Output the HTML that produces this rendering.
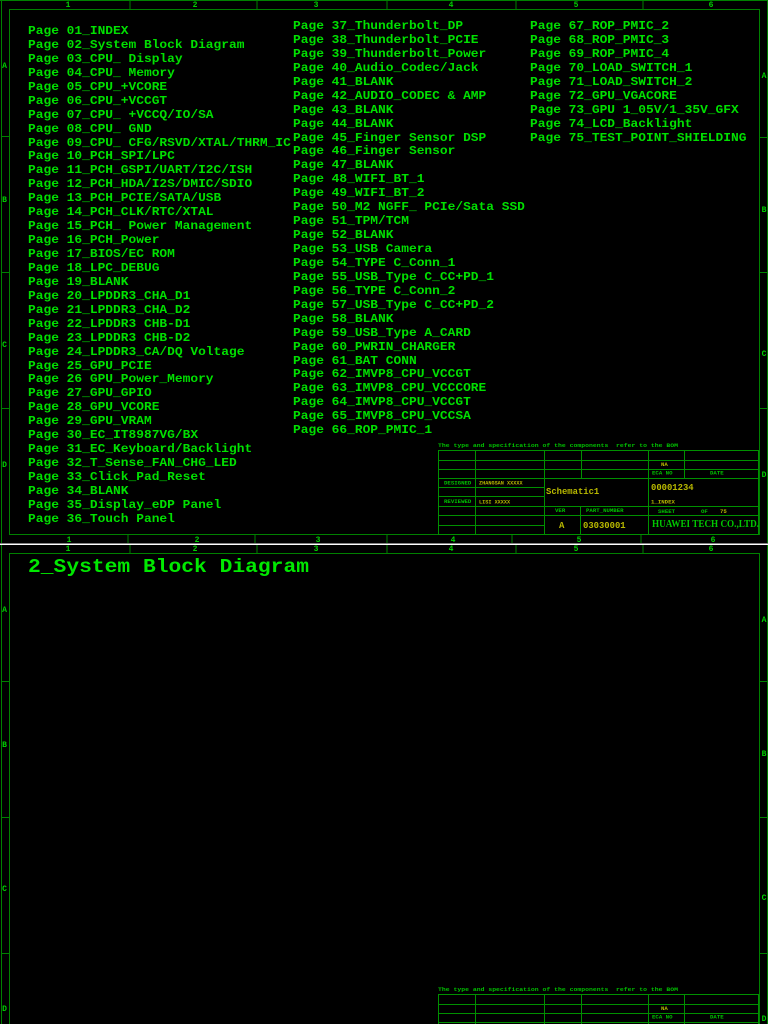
<!DOCTYPE html>
<html><head><meta charset="utf-8"><style>
html,body{margin:0;padding:0;background:#000;width:768px;height:1024px;overflow:hidden}
.c{position:absolute;white-space:pre;font:bold 11.8px/13.94px "Liberation Mono",monospace;color:#00e000;margin:0;transform:scaleX(1.092);transform-origin:0 0}
svg{position:absolute;left:0;top:0}
</style></head><body>
<svg width="768" height="1024" viewBox="0 0 768 1024">
<g stroke="#008000" stroke-width="1" fill="none" shape-rendering="crispEdges">
<path d="M1.5 0V543M9.5 9.5H759.5V534.5H9.5ZM767.5 0V543M0 0.5H768M130 0V9M257 0V9M387 0V9M516 0V9M643 0V9M128 535V543M255 535V543M387 535V543M512 535V543M641 535V543M1 136.5H9M1 272.5H9M1 408.5H9M760 137.5H768M760 272.5H768M760 408.5H768"/>
<path d="M1.5 545V1024M9.5 1024V553.5H759.5V1024M767.5 545V1024M130 545V553M257 545V553M387 545V553M516 545V553M643 545V553M1 681.5H9M1 817.5H9M1 953.5H9M760 681.5H768M760 817.5H768M760 953.5H768"/>
<g id="tb" stroke="#009000"><path d="M438.5 450.5H758.5V534.5H438.5ZM438.5 460.5H758.5M438.5 469.5H758.5M438.5 478.5H758.5M475.5 450.5V534.5M544.5 450.5V534.5M581.5 450.5V478.5M648.5 450.5V534.5M684.5 450.5V478.5M438.5 487.5H544.5M438.5 496.5H544.5M438.5 506.5H758.5M438.5 515.5H758.5M438.5 525.5H544.5M580.5 506.5V534.5"/></g>
<path stroke="#009000" d="M438.5 1024V994.5H758.5V1024M438.5 1004.5H758.5M438.5 1013.5H758.5M438.5 1022.5H758.5M475.5 994.5V1024M544.5 994.5V1024M581.5 994.5V1024M648.5 994.5V1024M684.5 994.5V1024"/>
</g>
<rect x="0" y="543.5" width="768" height="1.5" fill="#fff"/>
<g font-family="Liberation Mono" font-weight="bold" font-size="8" fill="#00d000" text-anchor="middle">
<text x="68" y="7">1</text><text x="195" y="7">2</text><text x="316" y="7">3</text><text x="451" y="7">4</text><text x="576" y="7">5</text><text x="711" y="7">6</text>
<text x="69" y="542">1</text><text x="197" y="542">2</text><text x="318" y="542">3</text><text x="453" y="542">4</text><text x="579" y="542">5</text><text x="713" y="542">6</text>
<text x="68" y="551">1</text><text x="195" y="551">2</text><text x="316" y="551">3</text><text x="451" y="551">4</text><text x="576" y="551">5</text><text x="711" y="551">6</text>
<text x="4.5" y="68">A</text><text x="4.5" y="202">B</text><text x="4.5" y="347">C</text><text x="4.5" y="467">D</text>
<text x="764" y="78">A</text><text x="764" y="212">B</text><text x="764" y="356">C</text><text x="764" y="477">D</text>
<text x="4.5" y="612">A</text><text x="4.5" y="747">B</text><text x="4.5" y="891">C</text><text x="4.5" y="1011">D</text>
<text x="764" y="622">A</text><text x="764" y="756">B</text><text x="764" y="900">C</text><text x="764" y="1021">D</text>
</g>
<g font-family="Liberation Mono" font-weight="bold" font-size="5.7" fill="#00c000">
<text x="438" y="447" textLength="240" lengthAdjust="spacingAndGlyphs" xml:space="preserve">The type and specification of the components  refer to the BOM</text>
<text x="438" y="991" textLength="240" lengthAdjust="spacingAndGlyphs" xml:space="preserve">The type and specification of the components  refer to the BOM</text>
<text x="444" y="484.5">DESIGNED</text><text x="444" y="503">REVIEWED</text>
<text x="555" y="512">VER</text><text x="586" y="512">PART_NUMBER</text>
<text x="652" y="474.5">ECA NO</text><text x="710" y="474.5">DATE</text>
<text x="652" y="1018.5">ECA NO</text><text x="710" y="1018.5">DATE</text>
<text x="658" y="513">SHEET</text><text x="701" y="513">OF</text>
</g>
<g font-family="Liberation Mono" font-weight="bold" fill="#b8b800">
<text x="661" y="466" font-size="5.7">NA</text><text x="661" y="1010" font-size="5.7">NA</text>
<text x="479" y="484.5" font-size="5.2">ZHANGSAN XXXXX</text>
<text x="479" y="503.5" font-size="5.2">LISI XXXXX</text>
<text x="546" y="494" font-size="8.9">Schematic1</text>
<text x="651" y="490" font-size="8.9">00001234</text>
<text x="651" y="503.5" font-size="5.7">1_INDEX</text>
<text x="720" y="513" font-size="5.7">75</text>
<text x="559" y="528" font-size="9">A</text>
<text x="583" y="528" font-size="8.9">03030001</text>
</g>
<text x="652" y="527" font-family="Liberation Serif" font-weight="bold" font-size="10.2" fill="#00c800" textLength="107" lengthAdjust="spacingAndGlyphs">HUAWEI TECH CO.,LTD.</text>
<text x="28" y="572" font-family="Liberation Mono" font-weight="bold" font-size="19.5" fill="#00e800" textLength="281" lengthAdjust="spacingAndGlyphs">2_System Block Diagram</text>
</svg>
<pre class="c" style="left:28px;top:25px">Page 01_INDEX
Page 02_System Block Diagram
Page 03_CPU_ Display
Page 04_CPU_ Memory
Page 05_CPU_+VCORE
Page 06_CPU_+VCCGT
Page 07_CPU_ +VCCQ/IO/SA
Page 08_CPU_ GND
Page 09_CPU_ CFG/RSVD/XTAL/THRM_IC
Page 10_PCH_SPI/LPC
Page 11_PCH_GSPI/UART/I2C/ISH
Page 12_PCH_HDA/I2S/DMIC/SDIO
Page 13_PCH_PCIE/SATA/USB
Page 14_PCH_CLK/RTC/XTAL
Page 15_PCH_ Power Management
Page 16_PCH_Power
Page 17_BIOS/EC ROM
Page 18_LPC_DEBUG
Page 19_BLANK
Page 20_LPDDR3_CHA_D1
Page 21_LPDDR3_CHA_D2
Page 22_LPDDR3 CHB-D1
Page 23_LPDDR3 CHB-D2
Page 24_LPDDR3_CA/DQ Voltage
Page 25_GPU_PCIE
Page 26 GPU_Power_Memory
Page 27_GPU_GPIO
Page 28_GPU_VCORE
Page 29_GPU_VRAM
Page 30_EC_IT8987VG/BX
Page 31_EC_Keyboard/Backlight
Page 32_T_Sense_FAN_CHG_LED
Page 33_Click_Pad_Reset
Page 34_BLANK
Page 35_Display_eDP Panel
Page 36_Touch Panel</pre>
<pre class="c" style="left:293px;top:20px">Page 37_Thunderbolt_DP
Page 38_Thunderbolt_PCIE
Page 39_Thunderbolt_Power
Page 40_Audio_Codec/Jack
Page 41_BLANK
Page 42_AUDIO_CODEC &amp; AMP
Page 43_BLANK
Page 44_BLANK
Page 45_Finger Sensor DSP
Page 46_Finger Sensor
Page 47_BLANK
Page 48_WIFI_BT_1
Page 49_WIFI_BT_2
Page 50_M2 NGFF_ PCIe/Sata SSD
Page 51_TPM/TCM
Page 52_BLANK
Page 53_USB Camera
Page 54_TYPE C_Conn_1
Page 55_USB_Type C_CC+PD_1
Page 56_TYPE C_Conn_2
Page 57_USB_Type C_CC+PD_2
Page 58_BLANK
Page 59_USB_Type A_CARD
Page 60_PWRIN_CHARGER
Page 61_BAT CONN
Page 62_IMVP8_CPU_VCCGT
Page 63_IMVP8_CPU_VCCCORE
Page 64_IMVP8_CPU_VCCGT
Page 65_IMVP8_CPU_VCCSA
Page 66_ROP_PMIC_1</pre>
<pre class="c" style="left:530px;top:20px">Page 67_ROP_PMIC_2
Page 68_ROP_PMIC_3
Page 69_ROP_PMIC_4
Page 70_LOAD_SWITCH_1
Page 71_LOAD_SWITCH_2
Page 72_GPU_VGACORE
Page 73_GPU 1_05V/1_35V_GFX
Page 74_LCD_Backlight
Page 75_TEST_POINT_SHIELDING</pre>
</body></html>
